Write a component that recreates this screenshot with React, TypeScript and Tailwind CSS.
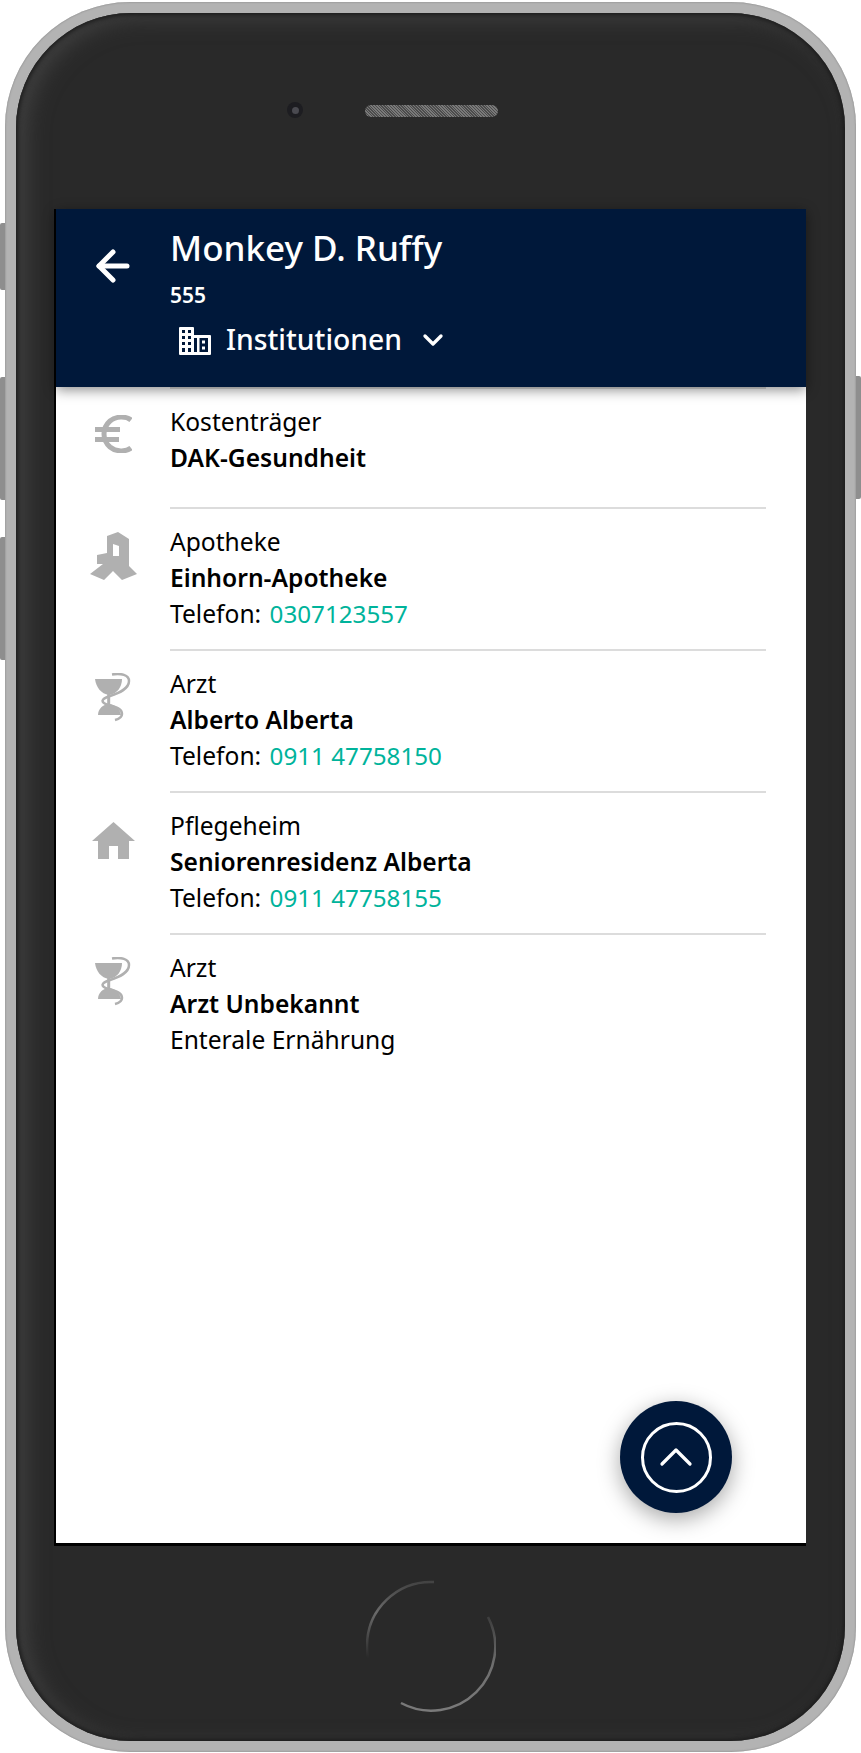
import { ArrowLeft, ChevronDown, ChevronUp } from "lucide-react";

const font = "[font-family:'Noto_Sans',sans-serif]";

function BuildingIcon() {
  return (
    <svg width="32" height="28" viewBox="0 0 32 28" fill="#fff" className="mt-[3px]">
      <path
        fillRule="evenodd"
        d="M0 1a1 1 0 0 1 1-1h13a1 1 0 0 1 1 1v7h16a1 1 0 0 1 1 1v18a1 1 0 0 1-1 1H1a1 1 0 0 1-1-1ZM3 3v3h3V3Zm6 0v3h3V3ZM3 9v3h3V9Zm6 0v3h3V9Zm-6 6v3h3v-3Zm6 0v3h3v-3Zm-6 6v4h3v-4Zm6 0v4h3v-4Zm6-10v14h14V11Z"
      />
      <path d="M18 11h2.500v14H18ZM23 13.500h3v3h-3ZM23 19.500h3v3h-3Z" />
    </svg>
  );
}

function EuroIcon() {
  return (
    <svg width="38" height="38" viewBox="0 0 38 38" fill="none" stroke="#b0b0b0" className="mt-[6px]">
      <path d="M37 5C32 1 22 1 16 6 8 13 8 25 16 32c6 5 16 5 21 1" strokeWidth="5" />
      <path d="M1 14.500h25M1 24.500h24" strokeWidth="5" />
    </svg>
  );
}

function ApothekeIcon() {
  return (
    <svg width="47" height="50" viewBox="0 0 47 50" fill="#b0b0b0">
      <path
        fillRule="evenodd"
        d="M17 5 28 1l11 7v27l8 8-15 6-9-9-9 9-14-6 13-10H7v-9l10-2ZM23 13v12h6V15Z"
      />
    </svg>
  );
}

function AsclepiusIcon() {
  return (
    <svg width="36" height="49" viewBox="0 0 36 49" fill="none" stroke="#b0b0b0">
      <path d="M0 6h27c0 8-5 15-13 16C6 21 1 14 0 6Z" fill="#b0b0b0" stroke="none" />
      <path d="M13.700 21v12" strokeWidth="3" />
      <path d="M3 42c0-6 5-11 11-11 6 0 11 5 12 11Z" fill="#b0b0b0" stroke="none" />
      <path d="M17 1.500C26 0 34 2 34 8c0 8-10 12-19 15-9 3-10 6-2 9 7 2 14 3 14 9 0 3-3 5-7 6" strokeWidth="2.500" />
    </svg>
  );
}

function HomeIcon() {
  return (
    <svg width="43" height="37" viewBox="0 0 43 37" fill="#b0b0b0" className="mt-[7px]">
      <path d="M21.500 0 43 19h-6v18H26V24h-9v13H6V19H0Z" />
    </svg>
  );
}

function InstitutionRow({
  icon,
  type,
  name,
  detail,
  phone,
  first,
  last,
}: {
  icon: React.ReactNode;
  type: string;
  name: string;
  detail?: string;
  phone?: string;
  first?: boolean;
  last?: boolean;
}) {
  return (
    <div className={`flex ${first ? "h-[122px]" : "h-[142px]"}`}>
      <div className="flex w-[114px] shrink-0 justify-center pt-[22px]">{icon}</div>
      <div
        className={`flex-1 pt-[15px] ${last ? "" : "border-b-2"} ${first ? "border-t-2" : ""} border-[#dcdcdc]`}
      >
        <p className="text-[24.6px] leading-[36px] text-black">{type}</p>
        <p className="text-[24.6px] leading-[36px] font-semibold text-black">{name}</p>
        {phone && (
          <p className="text-[24.6px] leading-[36px] text-black">
            Telefon: <span className="ml-[2px] text-[24.2px] text-[#00b39b]">{phone}</span>
          </p>
        )}
        {detail && <p className="text-[24.6px] leading-[36px] text-black">{detail}</p>}
      </div>
    </div>
  );
}

export default function App() {
  return (
    <div className={`relative h-[1753px] w-[861px] overflow-hidden bg-white ${font}`}>
      {/* side buttons */}
      <div className="absolute top-[223px] left-0 h-[67px] w-[7px] rounded-l-[2px] bg-[#8e8e8e]" />
      <div className="absolute top-[377px] left-0 h-[123px] w-[7px] rounded-l-[2px] bg-[#8e8e8e]" />
      <div className="absolute top-[537px] left-0 h-[123px] w-[7px] rounded-l-[2px] bg-[#8e8e8e]" />
      <div className="absolute top-[376px] right-0 h-[123px] w-[7px] rounded-r-[2px] bg-[#8e8e8e]" />

      {/* phone body */}
      <div className="relative mt-[2px] ml-[5px] h-[1750px] w-[851px] rounded-[125px] bg-[#b3b3b3] p-[11px] shadow-[inset_0_0_2px_#777]">
        <div className="flex h-full flex-col items-center rounded-[115px] bg-[#292929] shadow-[inset_0_0_4px_2px_#1c1c1c,inset_10px_5px_22px_#414141]">
          <div className="flex h-[196px] w-full items-start justify-center gap-[62px] pt-[89px] pr-[76px]">
            <div className="flex h-[16px] w-[16px] items-center justify-center rounded-full bg-[#1d1d21]">
              <div className="h-[7px] w-[7px] rounded-full bg-[#4a4a50]" />
            </div>
            <div className="mt-[3px] h-[12px] w-[133px] rounded-full bg-[repeating-linear-gradient(45deg,#7a7a7a_0_1px,#4c4c4c_1px_2px)]" />
          </div>

          {/* screen */}
          <div className="relative ml-[38px] h-[1337px] w-[752px] self-start border-b-[3px] border-l-2 border-black bg-white">
            <header className="relative z-10 flex h-[178px] bg-[#00183a] text-white shadow-[0_3px_12px_rgba(0,0,0,0.45)]">
              <div className="flex w-[114px] shrink-0 justify-center pt-[33px]">
                <ArrowLeft size={48} strokeWidth={2.5} />
              </div>
              <div className="pt-[14px]">
                <h1 className="text-[35px] leading-[50px] font-medium">Monkey D. Ruffy</h1>
                <p className="mt-[9px] text-[21px] leading-[26px] font-semibold">555</p>
                <div className="mt-[11px] ml-[9px] flex items-center">
                  <BuildingIcon />
                  <span className="ml-[15px] text-[28.3px] leading-[40px] font-medium">Institutionen</span>
                  <ChevronDown size={32} strokeWidth={2.5} className="mt-[2px] ml-[15px]" />
                </div>
              </div>
            </header>

            <div className="pr-[40px]">
              <InstitutionRow
                icon={<EuroIcon />}
                type="Kostenträger"
                name="DAK-Gesundheit"
                first
              />
              <InstitutionRow
                icon={<ApothekeIcon />}
                type="Apotheke"
                name="Einhorn-Apotheke"
                phone="0307123557"
              />
              <InstitutionRow
                icon={<AsclepiusIcon />}
                type="Arzt"
                name="Alberto Alberta"
                phone="0911 47758150"
              />
              <InstitutionRow
                icon={<HomeIcon />}
                type="Pflegeheim"
                name="Seniorenresidenz Alberta"
                phone="0911 47758155"
              />
              <InstitutionRow
                icon={<AsclepiusIcon />}
                type="Arzt"
                name="Arzt Unbekannt"
                detail="Enterale Ernährung"
                last
              />
            </div>

            <button className="absolute right-[74px] bottom-[30px] flex h-[112px] w-[112px] items-center justify-center rounded-full bg-[#00183a] shadow-[0_6px_22px_rgba(0,0,0,0.35)]">
              <span className="flex h-[71px] w-[71px] items-center justify-center rounded-full border-[3px] border-white text-white">
                <ChevronUp size={56} strokeWidth={1.4} />
              </span>
            </button>
          </div>

          {/* home button */}
          <svg width="130" height="134" viewBox="0 0 130 134" fill="none" className="mt-[33px]" strokeWidth="2.500">
            <defs>
              <linearGradient id="homeLeft" x1="0" y1="0" x2="0" y2="1">
                <stop offset="0" stopColor="#6a6a6a" stopOpacity="0.4" />
                <stop offset="0.4" stopColor="#6a6a6a" />
                <stop offset="1" stopColor="#6a6a6a" stopOpacity="0" />
              </linearGradient>
              <linearGradient id="homeRight" x1="0" y1="0" x2="0" y2="1">
                <stop offset="0" stopColor="#6e6e6e" stopOpacity="0.3" />
                <stop offset="0.5" stopColor="#6e6e6e" />
                <stop offset="1" stopColor="#7a7a7a" />
              </linearGradient>
            </defs>
            <path d="M68 3A64 64 0 0 0 1 67a60 60 0 0 0 1 12" stroke="url(#homeLeft)" />
            <path d="M122 38A64 64 0 0 1 35 124" stroke="url(#homeRight)" />
          </svg>
        </div>
      </div>
    </div>
  );
}
